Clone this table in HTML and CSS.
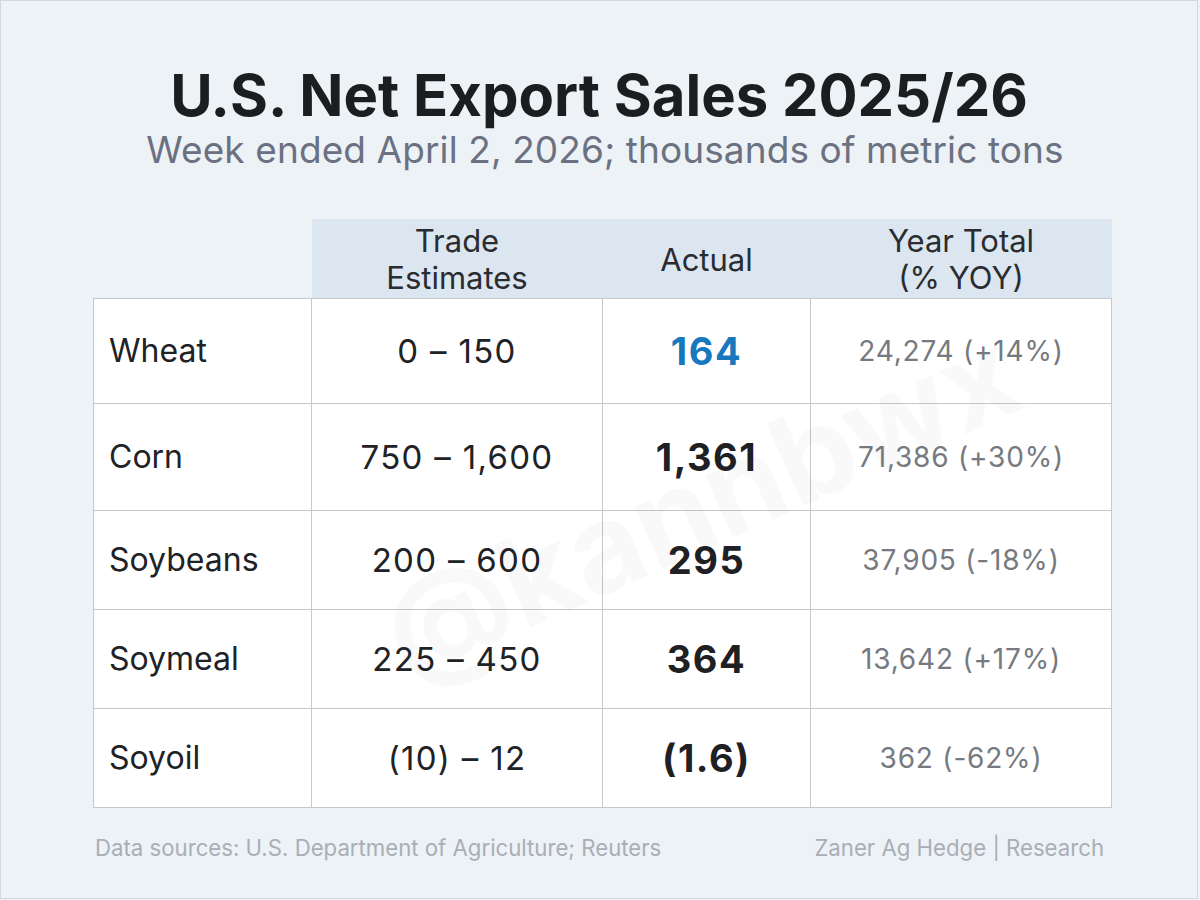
FILE: index.html
```html
<!DOCTYPE html>
<html lang="en">
<head>
<meta charset="utf-8">
<title>U.S. Net Export Sales 2025/26</title>
<link rel="stylesheet" href="styles.css">
</head>
<body>
<div class="frame">
  <header class="head">
    <h1 class="title">U.S. Net Export Sales 2025/26</h1>
    <p class="subtitle">Week ended April 2, 2026; thousands of metric tons</p>
  </header>
  <table class="grid">
    <thead>
      <tr>
        <th class="blank"></th>
        <th class="hcol">Trade<br>Estimates</th>
        <th class="hcol">Actual</th>
        <th class="hcol">Year Total<br>(% YOY)</th>
      </tr>
    </thead>
    <tbody>
      <tr>
        <td class="label">Wheat</td>
        <td class="est">0 – 150</td>
        <td class="actual blue">164</td>
        <td class="total">24,274 (+14%)</td>
      </tr>
      <tr>
        <td class="label">Corn</td>
        <td class="est">750 – 1,600</td>
        <td class="actual">1,361</td>
        <td class="total">71,386 (+30%)</td>
      </tr>
      <tr>
        <td class="label">Soybeans</td>
        <td class="est">200 – 600</td>
        <td class="actual">295</td>
        <td class="total">37,905 (-18%)</td>
      </tr>
      <tr>
        <td class="label">Soymeal</td>
        <td class="est">225 – 450</td>
        <td class="actual">364</td>
        <td class="total">13,642 (+17%)</td>
      </tr>
      <tr>
        <td class="label">Soyoil</td>
        <td class="est">(10) – 12</td>
        <td class="actual">(1.6)</td>
        <td class="total">362 (-62%)</td>
      </tr>
    </tbody>
  </table>
  <footer class="foot">
    <span>Data sources: U.S. Department of Agriculture; Reuters</span>
    <span>Zaner Ag Hedge | Research</span>
  </footer>
  <div class="watermark">@kannbwx</div>
</div>
</body>
</html>
```
FILE: styles.css
```css
* { box-sizing: border-box; }
html, body { margin: 0; padding: 0; background: #edf2f7; }
body { font-family: Inter, "Noto Sans", "Liberation Sans", sans-serif; color: #1f2124; }

.frame {
  position: relative;
  width: 1198px;
  height: 899px;
  border: 1px solid #cfd9e4;
  background: #edf2f7;
  overflow: hidden;
  padding-top: 60px;
}

.head { text-align: center; }
.title {
  margin: 0;
  font-size: 58px;
  line-height: 68px;
  font-weight: 700;
  color: #1c1d1f;
}
.subtitle {
  margin: -2px 0 0;
  padding-left: 12px;
  font-size: 37px;
  line-height: 46px;
  color: #6b7180;
  font-weight: 400;
  letter-spacing: 0.1px;
}

.grid {
  margin: 46px 0 0 92px;
  width: 1018px;
  border-collapse: collapse;
  table-layout: fixed;
}
.grid th.blank { width: 218px; background: transparent; }
.grid th.hcol {
  background: #dce6f0;
  font-weight: 400;
  font-size: 31px;
  line-height: 37px;
  color: #2a2c30;
  height: 79px;
  padding: 2px 0 0;
  vertical-align: middle;
}
.grid th:nth-child(2) { width: 291px; }
.grid th:nth-child(3) { width: 208px; }
.grid th:nth-child(4) { width: 301px; }

.grid td {
  background: #ffffff;
  border: 1px solid #c6c8cc;
  text-align: center;
  vertical-align: middle;
  padding: 0;
}
.grid tbody tr:nth-child(1) td { height: 105px; }
.grid tbody tr:nth-child(2) td { height: 107px; }
.grid tbody tr:nth-child(n+3) td { height: 99px; }

.grid td.label {
  text-align: left;
  padding-left: 15px;
  font-size: 32px;
  color: #202226;
}
.grid td.est {
  font-size: 33px;
  letter-spacing: 1.3px;
  color: #202226;
}
.grid td.actual {
  font-size: 38px;
  letter-spacing: 1.5px;
  font-weight: 700;
  color: #1f2023;
}
.grid td.actual.blue { color: #1878bd; }
.grid td.total {
  font-size: 28px;
  letter-spacing: 0.8px;
  color: #767a80;
}

.foot {
  display: flex;
  justify-content: space-between;
  margin: 26px 93px 0 94px;
  font-size: 22.2px;
  color: #a9aeb6;
}

.watermark {
  position: absolute;
  left: 360px;
  top: 440px;
  font-size: 124px;
  line-height: 1;
  font-weight: 700;
  color: rgba(60, 70, 90, 0.03);
  transform: rotate(-24deg);
  transform-origin: center center;
  pointer-events: none;
  white-space: nowrap;
}
```
